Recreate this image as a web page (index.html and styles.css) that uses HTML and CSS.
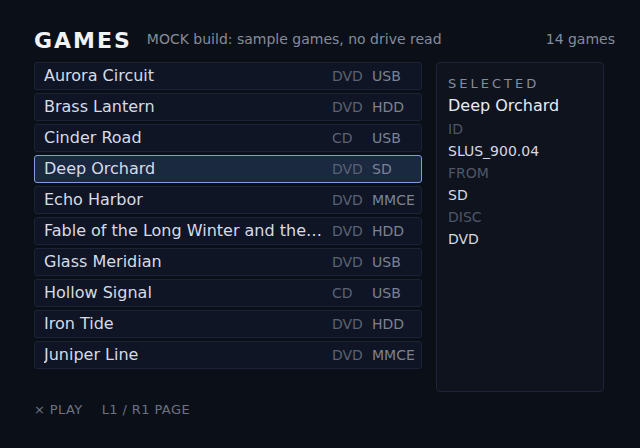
FILE: index.html
```html
<!DOCTYPE html>
<html lang="en">
<head>
  <meta charset="UTF-8">
  <title>Games</title>
  <link rel="stylesheet" href="styles.css">
</head>
<body>

  <div class="header">
    <h1>GAMES</h1>
    <span class="note">MOCK build: sample games, no drive read</span>
    <span class="count">14 games</span>
  </div>

  <div class="main">
    <ul class="list">
      <li class="row"><span class="name">Aurora Circuit</span><span class="disc">DVD</span><span class="src">USB</span></li>
      <li class="row"><span class="name">Brass Lantern</span><span class="disc">DVD</span><span class="src">HDD</span></li>
      <li class="row"><span class="name">Cinder Road</span><span class="disc">CD</span><span class="src">USB</span></li>
      <li class="row selected"><span class="name">Deep Orchard</span><span class="disc">DVD</span><span class="src">SD</span></li>
      <li class="row"><span class="name">Echo Harbor</span><span class="disc">DVD</span><span class="src">MMCE</span></li>
      <li class="row"><span class="name">Fable of the Long Winter and the Silent Crown</span><span class="disc">DVD</span><span class="src">HDD</span></li>
      <li class="row"><span class="name">Glass Meridian</span><span class="disc">DVD</span><span class="src">USB</span></li>
      <li class="row"><span class="name">Hollow Signal</span><span class="disc">CD</span><span class="src">USB</span></li>
      <li class="row"><span class="name">Iron Tide</span><span class="disc">DVD</span><span class="src">HDD</span></li>
      <li class="row"><span class="name">Juniper Line</span><span class="disc">DVD</span><span class="src">MMCE</span></li>
    </ul>

    <div class="panel">
      <div class="caption">SELECTED</div>
      <div class="title">Deep Orchard</div>
      <div class="label">ID</div>
      <div class="value">SLUS_900.04</div>
      <div class="label">FROM</div>
      <div class="value">SD</div>
      <div class="label">DISC</div>
      <div class="value">DVD</div>
    </div>
  </div>

  <div class="footer">
    <span>&times; PLAY</span>
    <span>L1 / R1 PAGE</span>
  </div>

</body>
</html>
```

FILE: styles.css
```css
body {
  margin: 0;
  padding: 28px 25px 0 34px;
  background-color: #0b0f17;
  font-family: "DejaVu Sans", sans-serif;
  color: #d6dbe6;
}
.header {
  display: flex;
  align-items: flex-start;
  height: 34px;
}
h1 {
  margin: 2px 15px 0 0;
  font-size: 22px;
  line-height: 22px;
  letter-spacing: 2px;
  color: #f0f2f6;
}
.note, .count {
  font-size: 14px;
  line-height: 22px;
  color: #858b9b;
}
.count { margin-left: auto; }

.main {
  display: flex;
  gap: 14px;
  height: 330px;
}
.list {
  list-style: none;
  margin: 0;
  padding: 0;
  width: 388px;
  display: flex;
  flex-direction: column;
  gap: 3px;
}
.row {
  display: flex;
  align-items: center;
  height: 25px;
  padding: 0 5px 1px 9px;
  background-color: #0f1524;
  border: 1px solid #1c2336;
  border-radius: 3px;
}
.row.selected {
  background-color: #1a2840;
  border-color: #7b9fdf;
}
.name {
  flex: 1;
  min-width: 0;
  font-size: 16px;
  white-space: nowrap;
  overflow: hidden;
  text-overflow: ellipsis;
  margin-right: 8px;
}
.disc { width: 40px; font-size: 14px; color: #5b6274; }
.src { width: 44px; font-size: 14px; color: #7b8294; }

.panel {
  width: 168px;
  box-sizing: border-box;
  padding: 11px 11px;
  background-color: #0e131d;
  border: 1px solid #1f2538;
  border-radius: 4px;
}
.caption {
  font-size: 13px;
  letter-spacing: 3px;
  line-height: 20px;
  color: #868c9b;
}
.title {
  font-size: 16px;
  line-height: 24px;
  color: #e8ebf1;
}
.label, .value {
  font-size: 14px;
  line-height: 22px;
}
.label { color: #4f5668; }
.value { color: #d4d9e3; }

.footer {
  display: flex;
  gap: 19px;
  margin-top: 10px;
  font-size: 13px;
  letter-spacing: 0.4px;
  color: #6b7284;
}
```
